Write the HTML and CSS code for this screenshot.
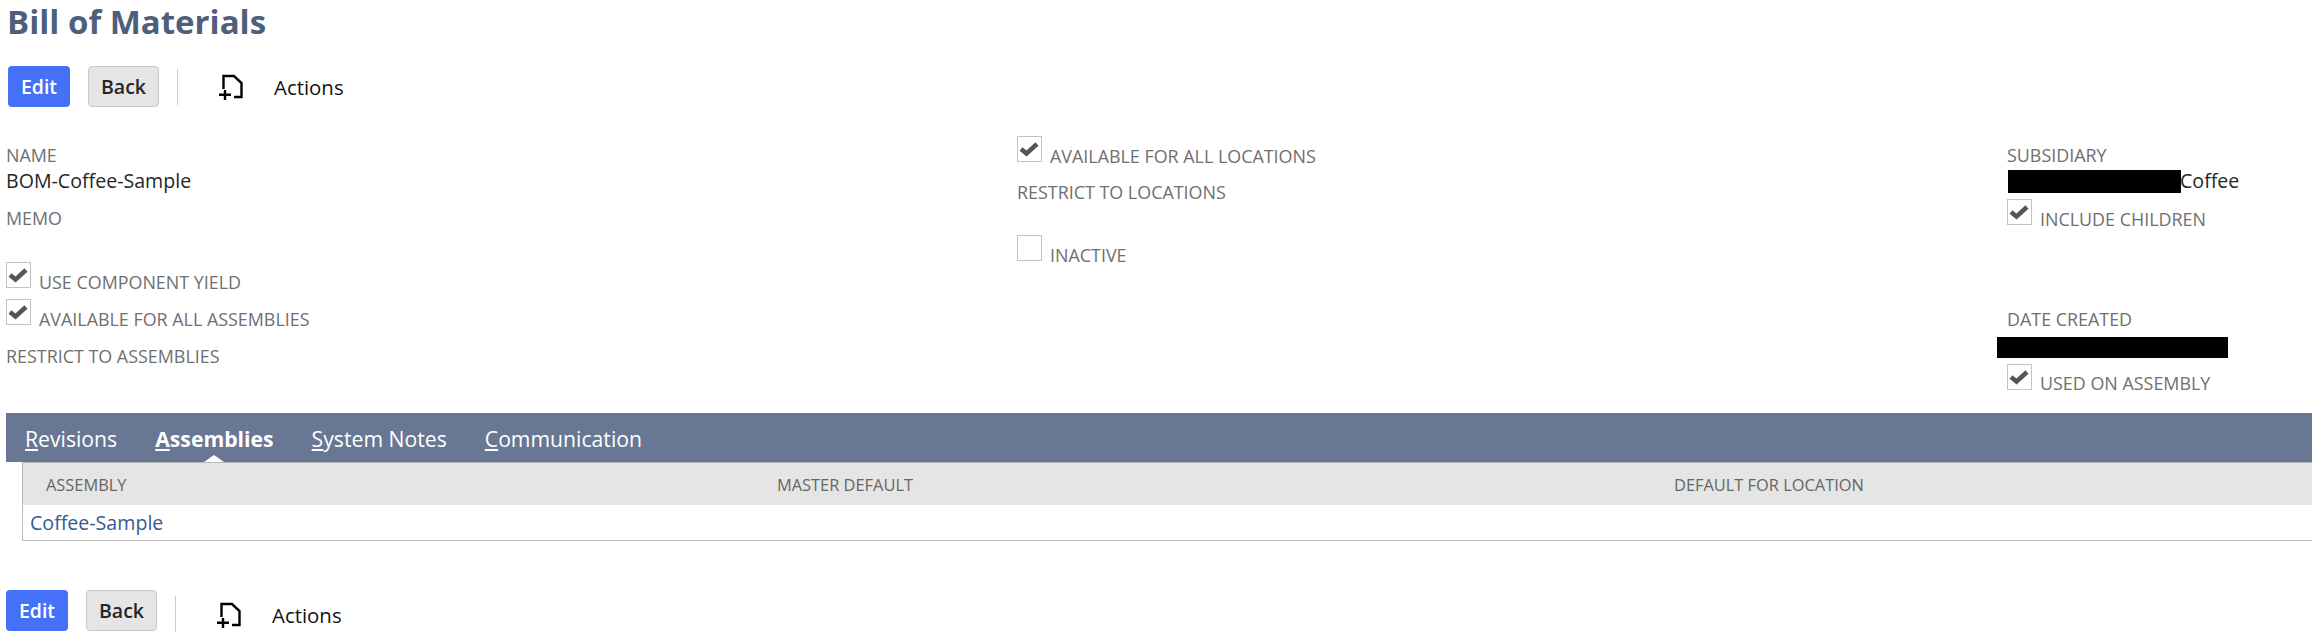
FILE: index.html
```html
<!DOCTYPE html>
<html lang="en">
<head>
  <meta charset="UTF-8">
  <title>Bill of Materials</title>
  <link rel="stylesheet" href="styles.css">
</head>
<body>
  <h1 class="title">Bill of Materials</h1>

  <div class="toolbar">
    <button class="btn btn-primary">Edit</button>
    <button class="btn">Back</button>
    <span class="toolbar-sep"></span>
    <svg class="doc-icon" width="28" height="30" viewBox="0 0 28 30" fill="none" stroke="#000" stroke-width="2.4">
      <path d="M6.5 17V4H17L24.5 11V25H17"/>
      <path d="M2 22.7H14M8 18V28"/>
    </svg>
    <span class="actions">Actions</span>
  </div>

  <div class="fields">
    <div class="col">
      <div class="field">
        <div class="label">NAME</div>
        <div class="value">BOM-Coffee-Sample</div>
      </div>
      <div class="label label-memo">MEMO</div>
      <div class="check-row check-first">
        <span class="check on"><svg width="23" height="24" viewBox="0 0 23 24"><path d="M3 12L8.5 16.5L19 7"/></svg></span>
        <span class="label">USE COMPONENT YIELD</span>
      </div>
      <div class="check-row">
        <span class="check on"><svg width="23" height="24" viewBox="0 0 23 24"><path d="M3 12L8.5 16.5L19 7"/></svg></span>
        <span class="label">AVAILABLE FOR ALL ASSEMBLIES</span>
      </div>
      <div class="label label-restrict label-restrict-low">RESTRICT TO ASSEMBLIES</div>
    </div>

    <div class="col">
      <div class="check-row">
        <span class="check on"><svg width="23" height="24" viewBox="0 0 23 24"><path d="M3 12L8.5 16.5L19 7"/></svg></span>
        <span class="label">AVAILABLE FOR ALL LOCATIONS</span>
      </div>
      <div class="label label-restrict">RESTRICT TO LOCATIONS</div>
      <div class="check-row check-inactive">
        <span class="check"></span>
        <span class="label">INACTIVE</span>
      </div>
    </div>

    <div class="col">
      <div class="field">
        <div class="label">SUBSIDIARY</div>
        <div class="value value-sub"><span class="redact redact-sub"></span>Coffee</div>
      </div>
      <div class="check-row check-children">
        <span class="check on"><svg width="23" height="24" viewBox="0 0 23 24"><path d="M3 12L8.5 16.5L19 7"/></svg></span>
        <span class="label">INCLUDE CHILDREN</span>
      </div>
      <div class="label label-date">DATE CREATED</div>
      <div class="redact redact-date"></div>
      <div class="check-row check-used">
        <span class="check on"><svg width="23" height="24" viewBox="0 0 23 24"><path d="M3 12L8.5 16.5L19 7"/></svg></span>
        <span class="label">USED ON ASSEMBLY</span>
      </div>
    </div>
  </div>

  <div class="tabs">
    <a class="tab"><u>R</u>evisions</a>
    <a class="tab tab-active"><u>A</u>ssemblies</a>
    <a class="tab"><u>S</u>ystem Notes</a>
    <a class="tab"><u>C</u>ommunication</a>
  </div>

  <div class="grid-wrap">
    <div class="grid-row grid-head">
      <div>ASSEMBLY</div>
      <div>MASTER DEFAULT</div>
      <div>DEFAULT FOR LOCATION</div>
    </div>
    <div class="grid-body"><a class="grid-link">Coffee-Sample</a></div>
  </div>

  <div class="toolbar toolbar-bottom">
    <button class="btn btn-primary">Edit</button>
    <button class="btn">Back</button>
    <span class="toolbar-sep"></span>
    <svg class="doc-icon" width="28" height="30" viewBox="0 0 28 30" fill="none" stroke="#000" stroke-width="2.4">
      <path d="M6.5 17V4H17L24.5 11V25H17"/>
      <path d="M2 22.7H14M8 18V28"/>
    </svg>
    <span class="actions">Actions</span>
  </div>
</body>
</html>
```

FILE: styles.css
```css
body {
  margin: 0;
  height: 640px;
  overflow: hidden;
  background-color: white;
  font-family: "Open Sans", sans-serif;
  color: #262626;
}
.title {
  margin: 0;
  padding-left: 7px;
  height: 66px;
  font-size: 33px;
  line-height: 44px;
  font-weight: 700;
  color: #4d5f7a;
}
.toolbar {
  display: flex;
  align-items: center;
  height: 41px;
  padding-left: 8px;
}
.btn {
  height: 41px;
  padding: 0 12px;
  border: 1px solid #c8c8c8;
  border-radius: 4px;
  background-color: #e5e5e5;
  color: #262626;
  font-family: inherit;
  font-size: 19.5px;
  font-weight: 600;
}
.btn-primary {
  width: 62px;
  margin-right: 18px;
  padding: 0;
  border: none;
  background-color: #4570f8;
  color: white;
}
.toolbar-sep {
  width: 1px;
  height: 36px;
  margin: 0 39px 0 18px;
  background-color: #cccccc;
}
.doc-icon {
  margin-right: 29px;
  flex: none;
}
.actions {
  font-size: 20.4px;
  font-weight: 500;
  color: #111111;
}
.fields {
  display: grid;
  grid-template-columns: 1011px 990px 1fr;
  height: 306px;
  padding: 29px 0 0 6px;
  box-sizing: border-box;
}
.field {
  margin-top: 8px;
}
.label {
  font-size: 17.9px;
  line-height: 22px;
  color: #6f6f6f;
}
.value {
  font-size: 19.6px;
  line-height: 30px;
  color: #262626;
}
.value-sub {
  display: flex;
  align-items: center;
}
.redact {
  background-color: black;
}
.redact-sub {
  width: 173px;
  height: 23px;
  margin-left: 1px;
  margin-right: -1px;
}
.redact-date {
  width: 231px;
  height: 21px;
  margin: 7px 0 0 -10px;
}
.label-memo {
  margin-top: 11px;
}
.check-row {
  display: flex;
  align-items: flex-end;
  gap: 8px;
  height: 26px;
}
.check-row .label {
  line-height: 22px;
  position: relative;
  top: 5px;
}
.check-row + .check-row {
  margin-top: 11px;
}
.check-first {
  margin-top: 33px;
}
.check-inactive {
  margin-top: 32px;
}
.check-children {
  margin-top: 3px;
}
.label-date {
  margin-top: 83px;
}
.check-used {
  margin-top: 6px;
}
.check-used .label {
  top: 4px;
}
.label-restrict {
  margin-top: 19px;
}
.label-restrict-low {
  margin-top: 20px;
}
.check {
  width: 25px;
  height: 26px;
  flex: none;
  border: 1px solid #c4c4c4;
  box-sizing: border-box;
  display: block;
}
.check svg {
  display: block;
  fill: none;
  stroke: #555555;
  stroke-width: 4.5;
}
.tabs {
  display: flex;
  align-items: center;
  gap: 38px;
  height: 49px;
  margin-left: 6px;
  padding: 2px 0 0 19px;
  box-sizing: border-box;
  background-color: #687794;
}
.tab {
  position: relative;
  font-size: 21.2px;
  color: white;
}
.tab-active {
  font-weight: 700;
}
.tab-active::after {
  content: "";
  position: absolute;
  left: 50%;
  bottom: -9px;
  margin-left: -10px;
  border-left: 10px solid transparent;
  border-right: 10px solid transparent;
  border-bottom: 7px solid white;
}
.grid-wrap {
  margin-left: 22px;
  height: 79px;
  border-left: 1px solid #b8b8b8;
  border-top: 1px solid #b8b8b8;
  border-bottom: 1px solid #b8b8b8;
  box-sizing: border-box;
}
.grid-row {
  display: grid;
  grid-template-columns: 731px 897px 1fr;
}
.grid-head {
  height: 42px;
  align-items: center;
  padding-left: 23px;
  background-color: #e5e5e5;
  font-size: 16.4px;
  color: #666666;
}
.grid-body {
  padding: 5px 0 0 7px;
  font-size: 19.6px;
  line-height: 26px;
}
.grid-link {
  color: #345a96;
}
.toolbar-bottom {
  margin-top: 49px;
  padding-left: 6px;
}
.toolbar-bottom .doc-icon,
.toolbar-bottom .actions {
  position: relative;
  top: 4px;
}
.toolbar-bottom .toolbar-sep {
  position: relative;
  top: 3px;
}
```
